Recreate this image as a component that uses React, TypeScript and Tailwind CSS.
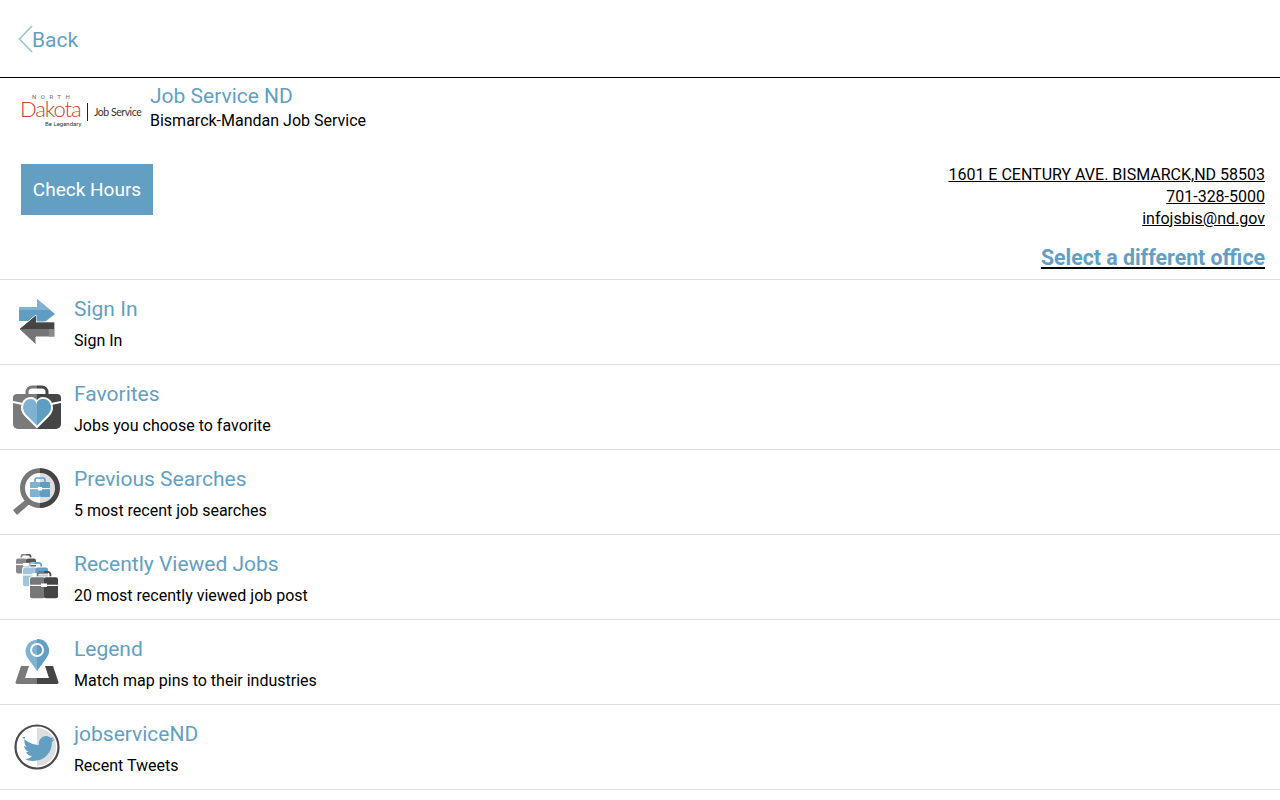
import type { ReactNode } from "react";

const BLUE = "#639fc3";

function SignInIcon() {
  return (
    <svg width="36" height="46" viewBox="0 0 36 46">
      <path d="M0 8h18V0l18 15-18 14v-7H0z" fill="#5f9dc2" />
      <path d="M0 8h18V0l12 10v1H0z" fill="#7fb2d1" />
      <path d="M36 23H17v-7L0 30l17 16v-8h19z" fill="#757575" stroke="#fff" strokeWidth="1" />
      <path d="M35 23.500H17v-7L1 30h34z" fill="#454545" />
      <path d="M30 30h5v7.500h-5z" fill="#8a8a8a" />
    </svg>
  );
}

function FavoritesIcon() {
  return (
    <svg width="48" height="44" viewBox="0 0 48 44">
      <path d="M14 10V7a5 5 0 0 1 5-5h5" fill="none" stroke="#777" strokeWidth="3" />
      <path d="M34 10V7a5 5 0 0 0-5-5h-5" fill="none" stroke="#454545" strokeWidth="3" />
      <path d="M4 9h20v35H5a5 5 0 0 1-5-5V13a4 4 0 0 1 4-4z" fill="#7a7a7a" />
      <path d="M24 9h20a4 4 0 0 1 4 4v26a5 5 0 0 1-5 5H24z" fill="#454545" />
      <path d="M0 17c8 1 12 3 14 4h20c2-1 6-3 14-4" fill="none" stroke="#fff" strokeWidth="2" />
      <path
        d="M24 42 12 30C6 23 10 13 18 13c3 0 5 2 6 4 1-2 3-4 6-4 8 0 12 10 6 17z"
        fill="#7fb2d1"
        stroke="#fff"
        strokeWidth="2"
      />
      <path d="M24 40.500V17c1-2 3-3 6-3 7 0 11 9 5 15z" fill="#5f9dc2" />
    </svg>
  );
}

function SearchesIcon() {
  return (
    <svg width="48" height="48" viewBox="0 0 48 48">
      <path d="M16 29 0 42l4 5 16-14z" fill="#7a7a7a" />
      <circle cx="27" cy="20" r="19" fill="#fff" />
      <path d="M27 5a15 15 0 0 1 0 30z" fill="#dedede" />
      <path d="M27 0a20 20 0 0 0 0 40v-5a15 15 0 0 1 0-30z" fill="#777" />
      <path d="M27 0a20 20 0 0 1 0 40v-5a15 15 0 0 0 0-30z" fill="#454545" />
      <path d="M22 15v-3a2 2 0 0 1 2-2h6a2 2 0 0 1 2 2v3" fill="none" stroke="#639fc3" strokeWidth="1.600" />
      <rect x="17" y="14" width="10" height="15" rx="1" fill="#7fb2d1" />
      <rect x="27" y="14" width="10" height="15" rx="1" fill="#5f9dc2" />
      <path d="M17 20h20v1.200H17z" fill="#fff" />
      <rect x="25" y="19" width="4" height="3.500" fill="#fff" />
    </svg>
  );
}

function Case({ x, y, left, right, w }: { x: number; y: number; left: string; right: string; w: number }) {
  const top = w * 0.22;
  const h = w * 0.75;
  return (
    <g transform={`translate(${x} ${y})`}>
      <path
        d={`M${w * 0.27} ${top + 1}V${top * 0.6}a${top * 0.45} ${top * 0.45} 0 0 1 ${top * 0.45}-${top * 0.45}H${w * 0.5}`}
        fill="none"
        stroke={left}
        strokeWidth="1.800"
      />
      <path
        d={`M${w * 0.73} ${top + 1}V${top * 0.6}a${top * 0.45} ${top * 0.45} 0 0 0-${top * 0.45}-${top * 0.45}H${w * 0.5}`}
        fill="none"
        stroke={right}
        strokeWidth="1.800"
      />
      <rect x="-1" y={top - 1} width={w + 2} height={h + 2} rx="3" fill="#fff" />
      <rect x="0" y={top} width={w / 2 + 1} height={h} rx="2" fill={left} />
      <rect x={w / 2} y={top} width={w / 2} height={h} rx="2" fill={right} />
      <path d={`M0 ${top + h * 0.36}h${w}v1.300H0z`} fill="#fff" />
      <rect x={w / 2 - 3} y={top + h * 0.3} width="6" height="3.500" fill="#fff" />
    </g>
  );
}

function RecentIcon() {
  return (
    <svg width="44" height="46" viewBox="0 0 44 46">
      <Case x={1} y={0} left="#888" right="#555" w={20} />
      <Case x={8} y={8} left="#a0c5dc" right="#639fc3" w={25} />
      <Case x={15} y={17} left="#777" right="#454545" w={28} />
    </svg>
  );
}

function LegendIcon() {
  return (
    <svg width="44" height="46" viewBox="0 0 44 46">
      <path d="M6 27h8l-4 12h12v6H2a1.500 1.500 0 0 1-1.400-2z" fill="#7a7a7a" />
      <path d="M38 27h-8l4 12H22v6h20a1.500 1.500 0 0 0 1.400-2z" fill="#454545" />
      <path d="M22 32 12 18a11.500 11.500 0 1 1 20 0z" fill="#7fb2d1" />
      <path d="M22 32 32 18A11.500 11.500 0 0 0 22 0z" fill="#639fc3" />
      <circle cx="22" cy="11" r="7" fill="#fff" />
      <circle cx="22" cy="11" r="5" fill="#7fb2d1" />
      <path d="M22 6a5 5 0 0 1 0 10z" fill="#5f9dc2" />
    </svg>
  );
}

function TwitterIcon() {
  return (
    <svg width="46" height="46" viewBox="0 0 46 46">
      <path d="M23 4a19 19 0 0 1 0 38z" fill="#dedede" />
      <circle cx="23" cy="23" r="21.500" fill="none" stroke="#4a4a4a" strokeWidth="2.200" />
      <path
        d="M8 13c4 4 10 8 17 8-1-5 3-9 7-9 2 0 4 1 5 2l3-1-2 3 3-1-3 3c0 10-7 19-19 19-3 0-6-1-8-2 3 0 5-1 7-3-3 0-5-2-6-4h3c-3-1-5-4-5-6l3 1c-3-2-3-7-2-10z"
        fill="#639fc3"
      />
    </svg>
  );
}

function Logo() {
  return (
    <div className="flex h-[36px] w-[121px] items-center text-[#333]">
      <div className="relative h-[36px] w-[66px] shrink-0">
        <span className="absolute top-0 left-[11px] whitespace-nowrap text-[6px] leading-[6px] tracking-[4.500px] text-[#666]">
          NORTH
        </span>
        <span className="absolute top-[6px] left-[-1px] text-[22px] leading-[17px] font-light tracking-[-1.100px] text-[#c8432f] [font-family:Lato,sans-serif]">
          Dakota
        </span>
        <span className="absolute top-[27px] left-[24px] whitespace-nowrap text-[6px] leading-[6px] text-[#333]">
          Be Legendary.
        </span>
      </div>
      <div className="h-[18px] w-px shrink-0 bg-[#222]" />
      <span className="ml-[6px] whitespace-nowrap text-[10.500px] leading-none tracking-[-0.450px] [font-family:Lato,sans-serif]">
        Job Service
      </span>
    </div>
  );
}

const rows: { title: string; sub: string; icon: ReactNode }[] = [
  { title: "Sign In", sub: "Sign In", icon: <SignInIcon /> },
  { title: "Favorites", sub: "Jobs you choose to favorite", icon: <FavoritesIcon /> },
  { title: "Previous Searches", sub: "5 most recent job searches", icon: <SearchesIcon /> },
  { title: "Recently Viewed Jobs", sub: "20 most recently viewed job post", icon: <RecentIcon /> },
  { title: "Legend", sub: "Match map pins to their industries", icon: <LegendIcon /> },
  { title: "jobserviceND", sub: "Recent Tweets", icon: <TwitterIcon /> },
];

export default function App() {
  return (
    <div className="h-[800px] w-[1280px] overflow-hidden bg-white text-black [font-family:Roboto,sans-serif]">
      <header className="flex h-[78px] items-center border-b border-black pl-[18px]">
        <svg width="15" height="28" viewBox="0 0 15 28" className="mt-[1px]">
          <path d="M14 1 1.500 14 14 27" fill="none" stroke="#a3c6dc" strokeWidth="1.800" />
        </svg>
        <span className="mt-[3px] ml-[-1px] text-[21px] leading-none" style={{ color: BLUE }}>
          Back
        </span>
      </header>

      <section className="h-[202px] border-b border-[#dddddd] pr-[15px] pl-[21px]">
        <div className="flex h-[62px]">
          <div className="mt-[16px]">
            <Logo />
          </div>
          <div className="ml-[8px] pt-[5px]">
            <div className="text-[21px] leading-[26px]" style={{ color: BLUE }}>
              Job Service ND
            </div>
            <div className="text-base leading-[23px]">Bismarck-Mandan Job Service</div>
          </div>
        </div>
        <div className="flex items-start justify-between pt-[24px]">
          <button className="h-[51px] w-[132px] pt-[2px] text-[19px] text-white" style={{ background: BLUE }}>
            Check Hours
          </button>
          <div className="flex flex-col items-end text-base leading-[22px] underline">
            <span>1601 E CENTURY AVE. BISMARCK,ND 58503</span>
            <span>701-328-5000</span>
            <span>infojsbis@nd.gov</span>
            <span className="mt-[15px] text-[21.300px] leading-[26px] font-bold" style={{ color: BLUE }}>
              Select a different office
            </span>
          </div>
        </div>
      </section>

      {rows.map((r) => (
        <div key={r.title} className="flex h-[85px] border-b border-[#dddddd]">
          <div className="flex w-[74px] shrink-0 items-center justify-center">{r.icon}</div>
          <div className="pt-[16px]">
            <div className="text-[21px] leading-[26px]" style={{ color: BLUE }}>
              {r.title}
            </div>
            <div className="mt-[8px] text-base leading-[22px]">{r.sub}</div>
          </div>
        </div>
      ))}
    </div>
  );
}
